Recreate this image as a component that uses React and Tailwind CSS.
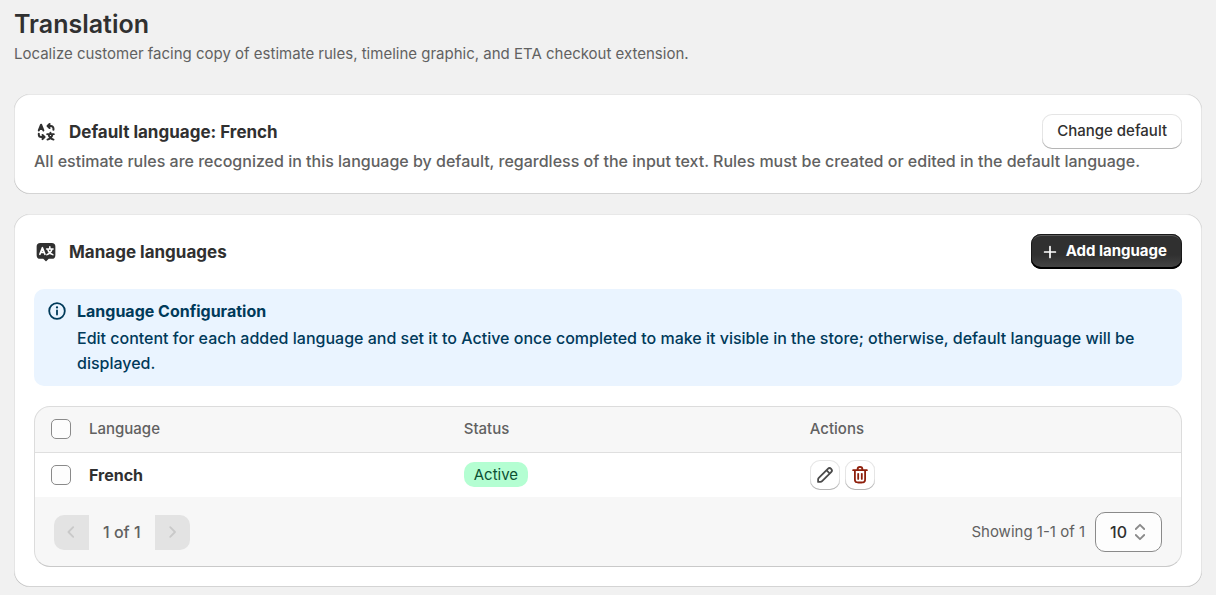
function Icon({ className = "size-6", children }) {
  return (
    <svg viewBox="0 0 20 20" aria-hidden="true" className={`shrink-0 ${className}`} fill="currentColor">
      {children}
    </svg>
  );
}

function Stroke({ d, width = 1.5 }) {
  return <path d={d} fill="none" stroke="currentColor" strokeWidth={width} strokeLinecap="round" strokeLinejoin="round" />;
}

function LanguageTranslateIcon() {
  return (
    <Icon>
      <Stroke d="M4 8.700 5.900 3.900 7.800 8.700M4.800 7.400h2.200" width={1.7} />
      <Stroke d="M13 3.300 11.300 5 13 6.700M11.500 5h2.600a2.100 2.100 0 0 1 2.100 2.100v1.100" width={1.7} />
      <Stroke d="M4 11.400v.7a2.100 2.100 0 0 0 2.100 2.100h2.500M7.100 12.500 8.800 14.200 7.100 15.900" width={1.7} />
      <Stroke d="M13.700 10.500v1.100M11 11.800h5.500M15.400 12.100c-.5 2.100-2.100 3.600-4.200 4.200M12.100 12.100c.5 2.100 2.100 3.600 4.200 4.200" width={1.6} />
    </Icon>
  );
}

function LanguageFilledIcon() {
  return (
    <Icon>
      <path d="M5.200 2.500h9.600a3 3 0 0 1 3 3v7.200a3 3 0 0 1-3 3h-2.500l-1.900 1.900a.6.6 0 0 1-.8 0l-1.900-1.900H5.200a3 3 0 0 1-3-3V5.500a3 3 0 0 1 3-3Z" />
      <g className="text-white">
        <Stroke d="M4.900 11.900 7 6.400 9.100 11.900M5.700 10.300h2.600" width={1.4} />
        <Stroke d="M13.200 5.700v1.500M10.500 7.500h5.400M14.900 7.700c-.5 2.200-2 3.700-4.100 4.500M11.500 7.700c.5 2.200 2 3.700 4.200 4.500" width={1.3} />
      </g>
    </Icon>
  );
}

function InfoIcon() {
  return (
    <Icon>
      <circle cx="10" cy="10" r="6.500" fill="none" stroke="currentColor" strokeWidth="1.500" />
      <circle cx="10" cy="7" r="0.950" />
      <Stroke d="M10 9.500v3.500" />
    </Icon>
  );
}

function EditIcon() {
  return (
    <Icon>
      <path
        fillRule="evenodd"
        d="M15.655 4.344a2.695 2.695 0 0 0-3.810 0l-.599.599-.009-.009-1.060 1.060.008.010-5.880 5.880a2.750 2.750 0 0 0-.805 1.944v1.922a.750.750 0 0 0 .750.750h1.922a2.750 2.750 0 0 0 1.944-.806l7.540-7.539a2.695 2.695 0 0 0 0-3.810Zm-4.409 2.720-5.880 5.880a1.250 1.250 0 0 0-.366.884v1.172h1.172c.331 0 .650-.132.883-.366l5.880-5.880-1.689-1.690Zm2.750.629.599-.599a1.195 1.195 0 1 0-1.690-1.689l-.598.599 1.690 1.689Z"
      />
    </Icon>
  );
}

function DeleteIcon() {
  return (
    <Icon>
      <path d="M11.500 8.250a.750.750 0 0 1 .750.750v4.250a.750.750 0 0 1-1.500 0v-4.250a.750.750 0 0 1 .750-.750Z" />
      <path d="M9.250 9a.750.750 0 0 0-1.500 0v4.250a.750.750 0 0 0 1.500 0v-4.250Z" />
      <path
        fillRule="evenodd"
        d="M7.250 5.250a2.750 2.750 0 0 1 5.500 0h3a.750.750 0 0 1 0 1.500h-.750v5.450c0 1.680 0 2.520-.327 3.162a3 3 0 0 1-1.311 1.311c-.642.327-1.482.327-3.162.327h-.400c-1.680 0-2.520 0-3.162-.327a3 3 0 0 1-1.311-1.311c-.327-.642-.327-1.482-.327-3.162v-5.450h-.750a.750.750 0 0 1 0-1.500h3Zm1.500 0a1.250 1.250 0 1 1 2.500 0h-2.500Zm-2.250 1.500h7v5.450c0 .865-.001 1.423-.036 1.848-.033.408-.090.559-.128.633a1.500 1.500 0 0 1-.655.655c-.074.038-.225.095-.633.128-.425.035-.983.036-1.848.036h-.400c-.865 0-1.423-.001-1.848-.036-.408-.033-.559-.090-.633-.128a1.500 1.500 0 0 1-.656-.655c-.037-.074-.094-.225-.127-.633-.035-.425-.036-.983-.036-1.848v-5.450Z"
      />
    </Icon>
  );
}

function Card({ children }) {
  return (
    <section className="rounded-2xl bg-white p-5 shadow-[inset_1px_0_0_0_rgba(0,0,0,0.1),inset_-1px_0_0_0_rgba(0,0,0,0.1),inset_0_-1px_0_0_rgba(0,0,0,0.17),inset_0_1px_0_0_rgba(0,0,0,0.09)]">
      {children}
    </section>
  );
}

function CardHeader({ icon, title, action }) {
  return (
    <div className="flex items-center justify-between">
      <div className="flex items-center gap-[11px]">
        {icon}
        <h2 className="text-[17px] leading-6 font-[650]">{title}</h2>
      </div>
      {action}
    </div>
  );
}

function Checkbox({ label }) {
  return (
    <input
      type="checkbox"
      aria-label={label}
      className="block size-5 appearance-none rounded-[5px] border border-[#8a8a8a] bg-[#fdfdfd] checked:bg-[#303030]"
    />
  );
}

function IconButton({ label, className, children }) {
  return (
    <button
      type="button"
      aria-label={label}
      className={`flex size-[30px] items-center justify-center rounded-[10px] bg-white shadow-[inset_0_-1px_0_0_#b5b5b5,inset_0_0_0_1px_rgba(0,0,0,0.1)] ${className}`}
    >
      {children}
    </button>
  );
}

function PageButton({ label, d, className }) {
  return (
    <button
      type="button"
      disabled
      aria-label={label}
      className={`flex size-[35px] items-center justify-center bg-[#e3e3e3] text-[#c9c9c9] ${className}`}
    >
      <Icon>
        <Stroke d={d} />
      </Icon>
    </button>
  );
}

export default function App() {
  return (
    <main className="min-h-screen bg-[#f1f1f1] px-[14px] pt-2 pb-2 font-[Inter,sans-serif] text-[16px] font-[450] text-[#303030]">
      <header className="mb-[26px]">
        <h1 className="text-[25px] leading-8 font-semibold">Translation</h1>
        <p className="text-[15px] leading-7 font-normal text-[#616161]">
          Localize customer facing copy of estimate rules, timeline graphic, and ETA checkout extension.
        </p>
      </header>

      <div className="flex flex-col gap-5">
        <Card>
          <CardHeader
            icon={<LanguageTranslateIcon />}
            title="Default language: French"
            action={
              <button
                type="button"
                className="h-[35px] rounded-[10px] bg-white px-[15px] text-[15px] font-[550] shadow-[inset_0_-1px_0_0_#b5b5b5,inset_0_0_0_1px_rgba(0,0,0,0.1)]"
              >
                Change default
              </button>
            }
          />
          <p className="leading-[25px] text-[#616161]">
            All estimate rules are recognized in this language by default, regardless of the input text. Rules must be
            created or edited in the default language.
          </p>
        </Card>

        <Card>
          <CardHeader
            icon={<LanguageFilledIcon />}
            title="Manage languages"
            action={
              <button
                type="button"
                className="flex h-[35px] items-center gap-1 rounded-[10px] bg-linear-to-b from-[#303030] from-60% to-[#474747] pr-[15px] pl-[7px] text-[15px] font-[650] text-white shadow-[inset_0_-2px_0_0_#000,inset_0_0_0_1px_#1a1a1a,inset_0_2px_0_0_#5c5c5c]"
              >
                <Icon>
                  <Stroke d="M10 5.500v9M5.500 10h9" width={1.4} />
                </Icon>
                Add language
              </button>
            }
          />

          <div className="mt-5 flex gap-2 rounded-[10px] bg-[#eaf4ff] px-[11px] py-[10px] text-[#003a5a]">
            <InfoIcon />
            <div>
              <h3 className="leading-[25px] font-[650]">Language Configuration</h3>
              <p className="mt-[2px] leading-[25px]">
                Edit content for each added language and set it to Active once completed to make it visible in the
                store; otherwise, default language will be displayed.
              </p>
            </div>
          </div>

          <div className="mt-5 overflow-hidden rounded-2xl border border-[#dcdcdc] border-b-[#c9c9c9] bg-[#f7f7f7]">
            <table className="w-full table-fixed text-left">
              <colgroup>
                <col className="w-[46px]" />
                <col className="w-[32.7%]" />
                <col className="w-[30.2%]" />
                <col />
              </colgroup>
              <thead>
                <tr className="h-[45px] border-b border-[#dfdfdf] text-[15px] text-[#616161]">
                  <th className="pl-4">
                    <Checkbox label="Select all languages" />
                  </th>
                  <th className="px-2 font-[550]">Language</th>
                  <th className="px-2 font-[550]">Status</th>
                  <th className="px-2 font-[550]">Actions</th>
                </tr>
              </thead>
              <tbody>
                <tr className="h-[45px] bg-white">
                  <td className="pl-4">
                    <Checkbox label="Select French" />
                  </td>
                  <td className="px-2 font-[650]">French</td>
                  <td className="px-2">
                    <span className="inline-block rounded-[10px] bg-[#b4fed2] px-[10px] text-[15px] leading-[25px] font-normal text-[#0c5132]">
                      Active
                    </span>
                  </td>
                  <td className="px-2">
                    <div className="flex gap-[5px]">
                      <IconButton label="Edit French" className="text-[#4a4a4a]">
                        <EditIcon />
                      </IconButton>
                      <IconButton label="Delete French" className="text-[#8e1f0b]">
                        <DeleteIcon />
                      </IconButton>
                    </div>
                  </td>
                </tr>
              </tbody>
            </table>

            <div className="flex items-center justify-between px-[19px] pt-[15px] pb-[14px] text-[#616161]">
              <nav aria-label="Pagination" className="flex items-center">
                <PageButton label="Previous page" d="M11 6 7 10l4 4" className="rounded-l-[10px]" />
                <span className="px-[14px]">1 of 1</span>
                <PageButton label="Next page" d="M8.500 6 12.500 10l-4 4" className="rounded-r-[10px]" />
              </nav>
              <div className="flex items-center gap-[10px]">
                <span className="text-[15px] font-normal">Showing 1-1 of 1</span>
                <div className="relative">
                  <select
                    aria-label="Rows per page"
                    defaultValue="10"
                    className="block h-10 w-[67px] appearance-none rounded-[10px] border border-[#8a8a8a] bg-[#fdfdfd] pl-[14px] text-[#303030]"
                  >
                    <option>10</option>
                    <option>25</option>
                    <option>50</option>
                  </select>
                  <Icon className="pointer-events-none absolute top-2 right-[10px] size-6 text-[#8a8a8a]">
                    <Stroke d="M6.500 7.500 10 4l3.500 3.500M6.500 12.500 10 16l3.500-3.500" />
                  </Icon>
                </div>
              </div>
            </div>
          </div>
        </Card>
      </div>
    </main>
  );
}
